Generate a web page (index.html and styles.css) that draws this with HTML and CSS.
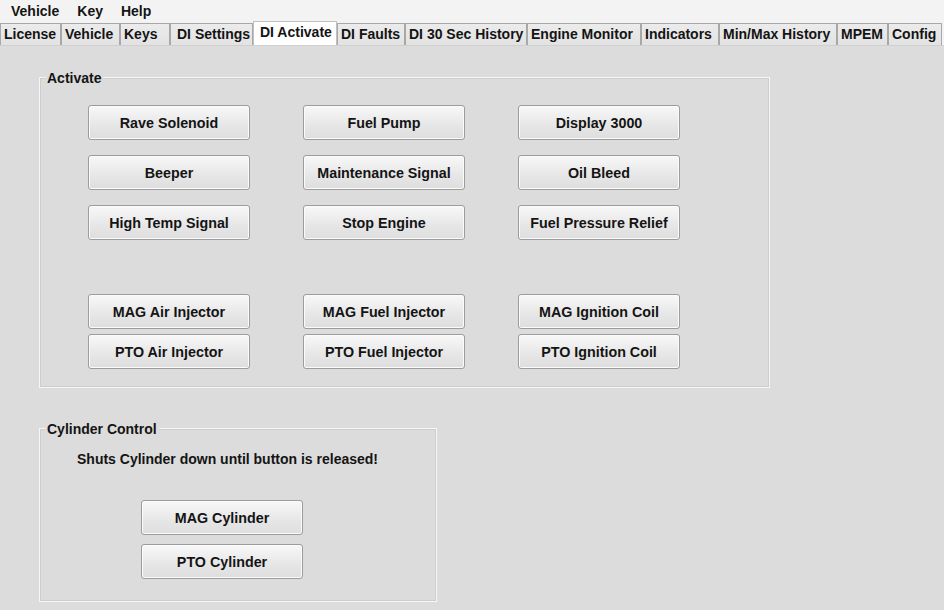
FILE: index.html
```html
<!DOCTYPE html>
<html>
<head>
<meta charset="utf-8">
<link rel="stylesheet" href="styles.css">
</head>
<body>
<div class="menubar">
  <span class="menu-item">Vehicle</span>
  <span class="menu-item">Key</span>
  <span class="menu-item">Help</span>
</div>
<div class="tabbar">
  <span class="tab w-license">License</span>
  <span class="tab w-vehicle">Vehicle</span>
  <span class="tab w-keys">Keys</span>
  <span class="tab w-settings">DI Settings</span>
  <span class="tab active w-activate">DI Activate</span>
  <span class="tab w-faults">DI Faults</span>
  <span class="tab w-history">DI 30 Sec History</span>
  <span class="tab w-engine">Engine Monitor</span>
  <span class="tab w-ind">Indicators</span>
  <span class="tab w-minmax">Min/Max History</span>
  <span class="tab w-mpem">MPEM</span>
  <span class="tab w-config">Config</span>
</div>
<div class="content">
  <div class="group activate">
    <span class="group-label">Activate</span>
    <div class="grid grid-main">
      <button class="btn">Rave Solenoid</button>
      <button class="btn">Fuel Pump</button>
      <button class="btn">Display 3000</button>
      <button class="btn">Beeper</button>
      <button class="btn">Maintenance Signal</button>
      <button class="btn">Oil Bleed</button>
      <button class="btn">High Temp Signal</button>
      <button class="btn">Stop Engine</button>
      <button class="btn">Fuel Pressure Relief</button>
    </div>
    <div class="grid grid-inj">
      <button class="btn">MAG Air Injector</button>
      <button class="btn">MAG Fuel Injector</button>
      <button class="btn">MAG Ignition Coil</button>
      <button class="btn">PTO Air Injector</button>
      <button class="btn">PTO Fuel Injector</button>
      <button class="btn">PTO Ignition Coil</button>
    </div>
  </div>
  <div class="group cylinder">
    <span class="group-label">Cylinder Control</span>
    <p class="note">Shuts Cylinder down until button is released!</p>
    <div class="cyl-buttons">
      <button class="btn">MAG Cylinder</button>
      <button class="btn">PTO Cylinder</button>
    </div>
  </div>
</div>
</body>
</html>
```

FILE: styles.css
```css
* { box-sizing: border-box; }
html, body {
  margin: 0;
  padding: 0;
  width: 944px;
  height: 610px;
  overflow: hidden;
  font-family: "Liberation Sans", Arial, sans-serif;
  font-weight: bold;
  font-size: 14px;
  color: #141414;
  background: #dcdcdc;
}
.menubar {
  height: 22px;
  background: #f3f3f3;
  display: flex;
  align-items: center;
  padding-left: 11px;
  gap: 18px;
}
.tabbar {
  height: 24px;
  background: #f3f3f3;
  display: flex;
  align-items: flex-end;
  border-bottom: 1px solid #d0d0d0;
}
.tab {
  height: 22px;
  line-height: 21px;
  padding: 0 3px;
  background: linear-gradient(#ececec, #e2e2e2);
  border: 1px solid #a8a8a8;
  border-bottom: none;
  white-space: nowrap;
}
.tab.active {
  height: 24px;
  line-height: 20px;
  background: #ffffff;
  padding: 0 6px;
  border-color: #c0c0c0;
}
.w-license { width: 61px; }
.w-vehicle { width: 59px; }
.w-keys { width: 50px; }
.w-settings { width: 83px; padding-left: 6px; }
.w-activate { width: 84px; }
.w-faults { width: 68px; }
.w-history { width: 122px; }
.w-engine { width: 114px; }
.w-ind { width: 78px; }
.w-minmax { width: 118px; }
.w-mpem { width: 51px; }
.w-config { width: 54px; }
.content {
  padding-top: 31px;
  padding-left: 39px;
}
.group {
  position: relative;
  border: 1px solid #f6f6f6;
  box-shadow: inset 0 0 0 1px #cdcdcd;
}
.group-label {
  position: absolute;
  top: -8px;
  left: 6px;
  line-height: 16px;
  padding: 0 2px 0 1px;
  background: #dcdcdc;
}
.activate {
  width: 731px;
  padding: 27px 0 18px 48px;
}
.grid {
  display: grid;
  grid-template-columns: repeat(3, 162px);
  column-gap: 53px;
}
.grid-main { row-gap: 15px; }
.grid-inj { row-gap: 5px; margin-top: 54px; }
.btn {
  height: 35px;
  width: 162px;
  font-family: "Liberation Sans", Arial, sans-serif;
  font-weight: bold;
  font-size: 14.3px;
  color: #141414;
  background: linear-gradient(#f8f8f8, #e6e6e6 60%, #dedede);
  border: 1px solid #9c9c9c;
  border-radius: 3px;
  padding: 0;
  box-shadow: inset 0 0 0 1px #fbfbfb;
}
.cylinder {
  margin-top: 40px;
  width: 398px;
  padding: 22px 0 22px 37px;
}
.note {
  margin: 0;
  line-height: 16px;
}
.cyl-buttons {
  margin-top: 33px;
  margin-left: 64px;
  display: flex;
  flex-direction: column;
  gap: 9px;
}
```
